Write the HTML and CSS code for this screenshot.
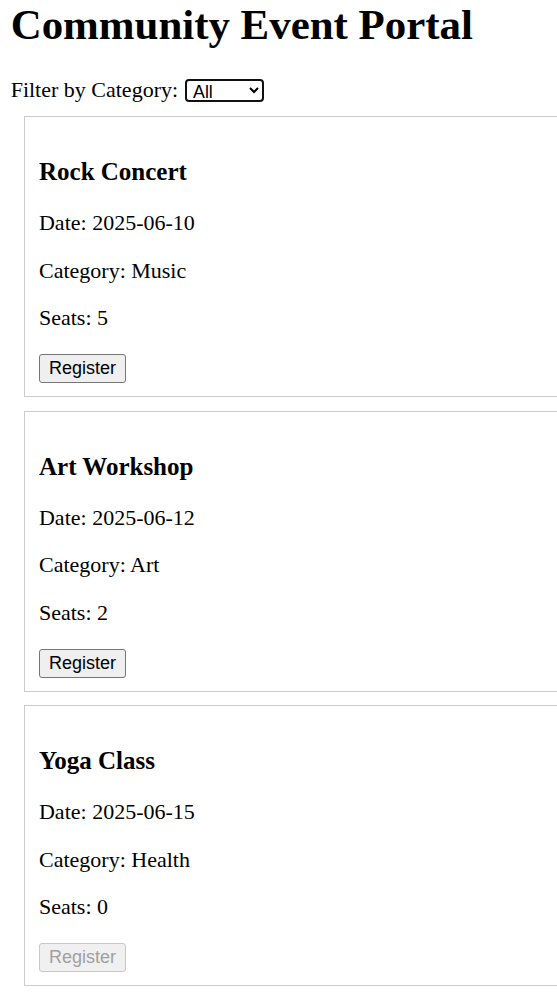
FILE: index.html
```html
<!DOCTYPE html>
<html lang="en">
<head>
<meta charset="utf-8">
<title>Community Event Portal</title>
<link rel="stylesheet" href="styles.css">
</head>
<body>
<h1 class="title">Community Event Portal</h1>
<div class="filter">
  <label for="cat">Filter by Category:</label>
  <select id="cat" class="select">
    <option>All</option>
    <option>Music</option>
    <option>Art</option>
    <option>Health</option>
  </select>
</div>
<div class="events">
  <div class="card">
    <h3 class="card-title">Rock Concert</h3>
    <p class="line">Date: 2025-06-10</p>
    <p class="line">Category: Music</p>
    <p class="line">Seats: 5</p>
    <button class="btn">Register</button>
  </div>
  <div class="card">
    <h3 class="card-title">Art Workshop</h3>
    <p class="line">Date: 2025-06-12</p>
    <p class="line">Category: Art</p>
    <p class="line">Seats: 2</p>
    <button class="btn">Register</button>
  </div>
  <div class="card">
    <h3 class="card-title">Yoga Class</h3>
    <p class="line">Date: 2025-06-15</p>
    <p class="line">Category: Health</p>
    <p class="line">Seats: 0</p>
    <button class="btn" disabled>Register</button>
  </div>
</div>
</body>
</html>
```
FILE: styles.css
```css
html {
  overflow-x: hidden;
  background: #fff;
}
body {
  margin: 0;
  padding: 0 10.67px;
  font-family: "Liberation Serif", "Times New Roman", serif;
  font-size: 22px;
  color: #000;
}
.title {
  font-size: 42.9px;
  font-weight: bold;
  margin: 0 0 28px;
}
.filter {
  display: flex;
  align-items: center;
  gap: 7px;
  height: 26px;
}
.select {
  font-family: "Liberation Sans", Arial, sans-serif;
  font-size: 17.78px;
  width: 79px;
  height: 23px;
  border: 2px solid #111;
  border-radius: 4px;
  background: #fff;
  color: #000;
  padding: 0 0 0 2px;
}
.events {
  display: flex;
  flex-direction: column;
  gap: 13.67px;
  padding-top: 13px;
}
.card {
  border: 1px solid #ccc;
  padding: 0 14px 13px;
  margin-left: 13.33px;
  width: 560px;
  flex: none;
}
.card-title {
  font-size: 25px;
  line-height: 28px;
  font-weight: bold;
  margin: 41px 0 25px;
}
.line {
  line-height: 24px;
  margin: 23.5px 0;
}
.btn {
  display: block;
  font-family: "Liberation Sans", Arial, sans-serif;
  font-size: 18px;
  padding: 0 9px;
  height: 29px;
  margin-top: 24px;
  border: 1px solid #767676;
  border-radius: 3px;
  background: #efefef;
  color: #000;
}
.btn:disabled {
  border-color: #c8c8c8;
  background: #f0f0f0;
  color: #a0a0a0;
}
```
